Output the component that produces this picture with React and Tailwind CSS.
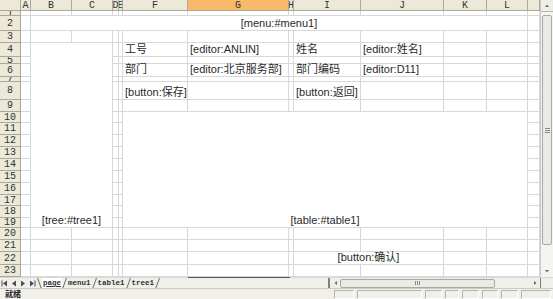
import React from "react";

const COLS = ["A", "B", "C", "D", "E", "F", "G", "H", "I", "J", "K", "L", "M"];
const ROWS = Array.from({ length: 23 }, (_, i) => i + 1);

// merged blocks (ci = column index into COLS)
const merges = [
  { r: 2, ci: 1, rs: 1, cs: 11, cls: "col-[3/14] row-[3/4]", text: "[menu:#menu1]" },
  { r: 4, ci: 1, rs: 16, cs: 2, cls: "col-[3/5] row-[5/21]", text: "[tree:#tree1]" },
  { r: 10, ci: 5, rs: 10, cs: 7, cls: "col-[7/14] row-[11/21]", text: "[table:#table1]" },
  { r: 22, ci: 8, rs: 1, cs: 2, cls: "col-[10/12] row-[23/24]", text: "[button:确认]" },
];

const values = {
  F4: "工号",
  G4: "[editor:ANLIN]",
  I4: "姓名",
  J4: "[editor:姓名]",
  F6: "部门",
  G6: "[editor:北京服务部]",
  I6: "部门编码",
  J6: "[editor:D11]",
  F8: "[button:保存]",
  I8: "[button:返回]",
};

const findMerge = (r, ci) =>
  merges.find((m) => r >= m.r && r < m.r + m.rs && ci >= m.ci && ci < m.ci + m.cs);

const Tri = ({ dir, bar }) => (
  <svg width="8" height="7" viewBox="0 0 8 7" className="shrink-0">
    {dir === "left" ? (
      <path d="M6 0.5 L2 3.5 L6 6.5 Z" fill="#4a4a4a" />
    ) : (
      <path d="M2 0.5 L6 3.5 L2 6.5 Z" fill="#4a4a4a" />
    )}
    {bar === "left" && <rect x="0.5" y="0.5" width="1" height="6" fill="#4a4a4a" />}
    {bar === "right" && <rect x="6.5" y="0.5" width="1" height="6" fill="#4a4a4a" />}
  </svg>
);

// small scroll arrow
const Arrow = ({ dir }) => {
  const d = {
    up: "M1 4 L3 1.5 L5 4 Z",
    down: "M1 2 L3 4.5 L5 2 Z",
    left: "M4 1 L1.5 3 L4 5 Z",
    right: "M2 1 L4.5 3 L2 5 Z",
  }[dir];
  return (
    <svg width="6" height="6" viewBox="0 0 6 6" className="shrink-0">
      <path d={d} fill="#6a6a6a" />
    </svg>
  );
};

const Slant = ({ back }) => (
  <svg width="5" height="11" viewBox="0 0 5 11" className="shrink-0">
    {back ? (
      <line x1="0.5" y1="0" x2="4.5" y2="11" stroke="#6b6b6b" strokeWidth="1" />
    ) : (
      <line x1="0.5" y1="11" x2="4.5" y2="0" stroke="#6b6b6b" strokeWidth="1" />
    )}
  </svg>
);

function Sheet() {
  const cells = [];
  // column header row
  cells.push(
    <div key="corner" className="bg-[#ece9d8] border-r border-b border-[#aca899]" />
  );
  COLS.forEach((c) => {
    cells.push(
      <div
        key={"h" + c}
        className={`flex items-center justify-center border-r border-b border-[#aca899] overflow-hidden ${
          c === "G" ? "bg-[#f8b96a]" : "bg-[#ece9d8]"
        }`}
      >
        {c !== "M" && c}
      </div>
    );
  });

  ROWS.forEach((r) => {
    cells.push(
      <div
        key={"r" + r}
        className="flex items-center justify-center bg-[#ece9d8] border-r border-b border-[#aca899] overflow-hidden leading-[9px]"
      >
        {r}
      </div>
    );
    COLS.forEach((c, ci) => {
      const m = findMerge(r, ci);
      if (m) {
        if (m.r === r && m.ci === ci) {
          cells.push(
            <div
              key={c + r}
              className={`${m.cls} flex items-end justify-center bg-white border-r border-b border-[#d8d8d8] font-['Liberation_Sans','Noto_Sans_CJK_SC',sans-serif] text-[11px] text-[#2a2a2a] leading-[13px]`}
            >
              <span className="whitespace-nowrap">{m.text}</span>
            </div>
          );
        }
        return;
      }
      const v = values[c + r];
      cells.push(
        <div
          key={c + r}
          className="flex items-end bg-white border-r border-b border-[#d8d8d8] pl-[2px] font-['Liberation_Sans','Noto_Sans_CJK_SC',sans-serif] text-[11px] text-[#2a2a2a] leading-[13px] min-w-0"
        >
          {v && <span className="whitespace-nowrap">{v}</span>}
        </div>
      );
    });
  });

  return (
    <div className="grid w-[540px] h-[277px] overflow-hidden grid-cols-[21px_10px_41px_41px_6px_4px_65px_101px_5px_67px_83px_43px_41px_12px] grid-rows-[11px_5px_15px_12px_14px_7px_13px_5px_18px_12px_11px_12px_12px_12px_12px_12px_12px_11px_12px_10px_12px_12px_13px_12px] font-['Liberation_Mono',monospace] text-[10px] text-[#333]">
      {cells}
    </div>
  );
}

function VScroll() {
  return (
    <div className="w-[13px] h-[277px] flex flex-col bg-[#f4f4f0] border-l border-[#c8c8c8]">
      <div className="h-[12px] flex items-center justify-center border-b border-[#b5b5b5] bg-[#eeede6]">
        <Arrow dir="up" />
      </div>
      <div className="flex-1 flex flex-col pt-[3px] pb-[20px]">
        <div className="flex-1 mx-[1px] rounded-[2px] border border-[#a9a9a9] bg-[#ebebe6] flex items-center justify-center">
          <div className="flex flex-col gap-[1px]">
            <div className="w-[5px] h-px bg-[#8a8a8a]" />
            <div className="w-[5px] h-px bg-[#8a8a8a]" />
            <div className="w-[5px] h-px bg-[#8a8a8a]" />
          </div>
        </div>
      </div>
      <div className="h-[12px] flex items-center justify-center">
        <Arrow dir="down" />
      </div>
    </div>
  );
}

function TabBar() {
  const tabs = ["page", "menu1", "table1", "tree1"];
  return (
    <div className="flex h-[11px] bg-[#f0efea]">
      <div className="flex items-center w-[188px] border-t border-[#d8d8d8]">
        <div className="flex items-center gap-[1px] pl-[1px] w-[37px]">
          <Tri dir="left" bar="left" />
          <Tri dir="left" />
          <Tri dir="right" />
          <Tri dir="right" bar="right" />
        </div>
        <Slant back />
        {tabs.map((t, i) => (
          <React.Fragment key={t}>
            <span
              className={`px-[1px] font-['Liberation_Mono',monospace] text-[7.5px] font-bold leading-[10px] text-[#333] ${
                i === 0 ? "underline bg-white" : ""
              }`}
            >
              {t}
            </span>
            <Slant />
          </React.Fragment>
        ))}
      </div>
      <div className="w-[102px] border-t border-[#555]" />
      <div className="w-[38px] border-t border-[#d8d8d8]" />
      <div className="flex flex-1 items-center border-t border-[#d8d8d8]">
        <div className="w-[2px] h-[10px] bg-[#808080]" />
        <div className="flex items-center flex-1 h-full px-[1px]">
          <div className="w-[9px] flex justify-center">
            <Arrow dir="left" />
          </div>
          <div className="w-[155px] h-[9px] rounded-[2px] border border-[#a9a9a9] bg-[#ebebe6] flex items-center justify-center gap-[1px]">
            <div className="w-px h-[4px] bg-[#8a8a8a]" />
            <div className="w-px h-[4px] bg-[#8a8a8a]" />
            <div className="w-px h-[4px] bg-[#8a8a8a]" />
          </div>
          <div className="flex-1" />
          <div className="w-[9px] flex justify-center">
            <Arrow dir="right" />
          </div>
        </div>
        <div className="w-px h-[10px] bg-[#808080]" />
        <div className="w-[12px] h-full" />
      </div>
    </div>
  );
}

function StatusBar() {
  const panels = [20, 65, 17, 14, 17, 16, 17, 30];
  return (
    <div className="flex items-center h-[11px] bg-[#f0efea] border-t border-[#c9c9c9]">
      <span className="pl-[5px] font-['Noto_Sans_CJK_SC',sans-serif] text-[8px] font-bold leading-none text-[#222]">
        就绪
      </span>
      <div className="flex-1" />
      <div className="flex gap-[3px] h-[9px] pr-[2px]">
        {panels.map((w, i) => (
          <div
            key={i}
            style={{ width: w }}
            className="border-t border-l border-[#b8b5a8] border-b border-r border-b-white border-r-white"
          />
        ))}
      </div>
    </div>
  );
}

export default function App() {
  return (
    <div className="w-[553px] h-[299px] overflow-hidden bg-white flex flex-col">
      <div className="flex">
        <Sheet />
        <VScroll />
      </div>
      <TabBar />
      <StatusBar />
    </div>
  );
}
